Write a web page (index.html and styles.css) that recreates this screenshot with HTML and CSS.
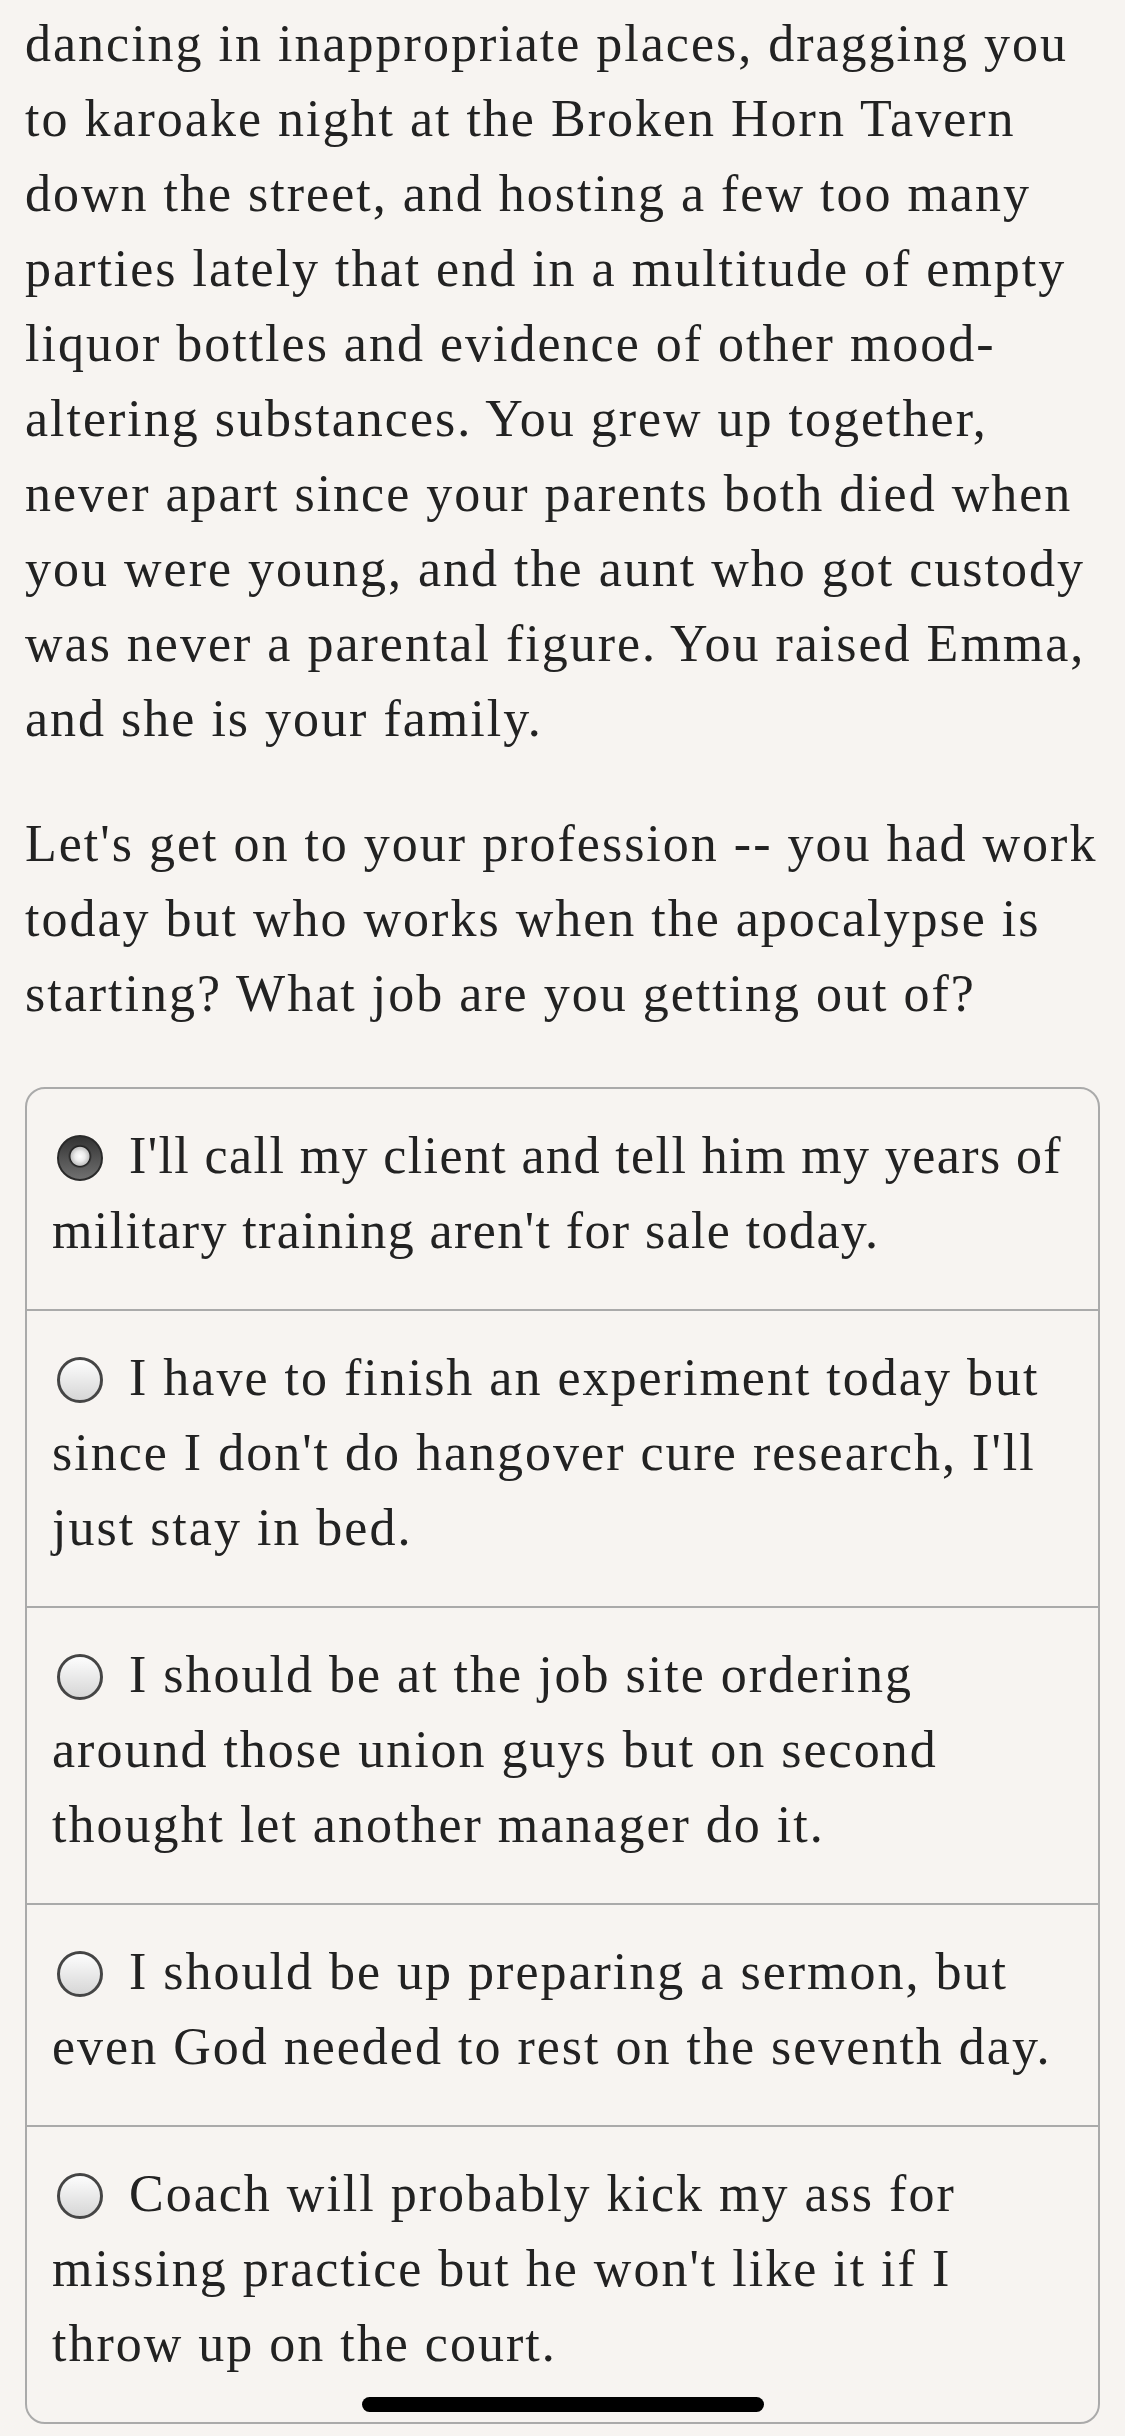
FILE: index.html
```html
<!doctype html>
<html lang="en">
<head>
    <meta charset="UTF-8">
    <meta name="viewport" content="width=device-width, initial-scale=1">
    <title>Chapter 1</title>
    <link rel="stylesheet" href="styles.css">
</head>
<body>
    <div class="page">
        <p>dancing in inappropriate places, dragging you to karoake night at the Broken Horn Tavern down the street, and hosting a few too many parties lately that end in a multitude of empty liquor bottles and evidence of other mood-altering substances. You grew up together, never apart since your parents both died when you were young, and the aunt who got custody was never a parental figure. You raised Emma, and she is your family.</p>

        <p>Let's get on to your profession -- you had work today but who works when the apocalypse is starting? What job are you getting out of?</p>

        <form class="choices">
            <label class="choice tight"><input type="radio" name="job" value="0" checked>I'll call my client and tell him my years of military training aren't for sale today.</label>
            <label class="choice"><input type="radio" name="job" value="1">I have to finish an experiment today but since I don't do hangover cure research, I'll just stay in bed.</label>
            <label class="choice"><input type="radio" name="job" value="2">I should be at the job site ordering around those union guys but on second thought let another manager do it.</label>
            <label class="choice"><input type="radio" name="job" value="3">I should be up preparing a sermon, but even God needed to rest on the seventh day.</label>
            <label class="choice"><input type="radio" name="job" value="4">Coach will probably kick my ass for missing practice but he won't like it if I throw up on the court.</label>
        </form>
    </div>

    <div class="home-bar"></div>
</body>
</html>
```

FILE: styles.css
```css
body {
    margin: 0;
    background-color: #f7f4f1;
    color: #222;
    font: 52px/75px "Liberation Serif", "Times New Roman", serif;
    letter-spacing: 2px;
}

.page {
    padding: 6px 25px 0;
}

p {
    margin: 0;
}

p + p {
    margin-top: 50px;
}

.choices {
    margin: 56px 0 0;
    border: 2px solid #aaa;
    border-radius: 20px;
    overflow: hidden;
}

.choice {
    display: block;
    padding: 29px 25px 41px;
    border-top: 2px solid #aaa;
}

.choice:first-child {
    border-top: none;
}

.tight {
    letter-spacing: 1.4px;
}

.choice input {
    -webkit-appearance: none;
    appearance: none;
    box-sizing: border-box;
    width: 46px;
    height: 46px;
    margin: 0 26px 0 5px;
    vertical-align: -8px;
    border: 3px solid #454545;
    border-radius: 50%;
    background: linear-gradient(#fdfdfd, #d6d6d6);
}

.choice input:checked {
    border: 2px solid #2a2a2a;
    background:
        radial-gradient(circle at 50% 46%, #fff 0, #ececec 5px, #c4c4c4 9px, #1e1e1e 10px, rgba(30, 30, 30, 0) 12px),
        linear-gradient(#333, #707070);
}

.home-bar {
    position: fixed;
    left: 50%;
    bottom: 24px;
    width: 402px;
    height: 15px;
    margin-left: -201px;
    border-radius: 8px;
    background: #000;
}
```
